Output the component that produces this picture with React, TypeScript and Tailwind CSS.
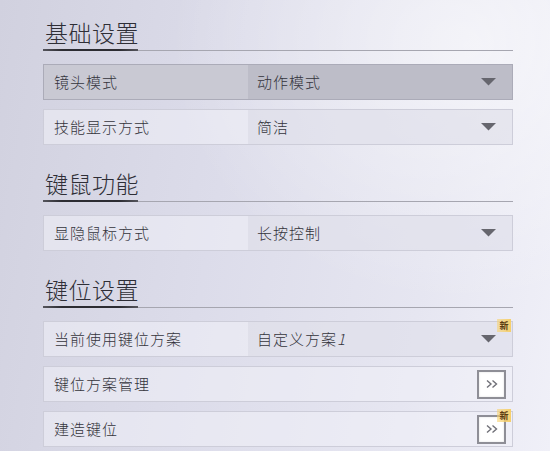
import React from "react";

const font = { fontFamily: '"Noto Sans CJK SC", "Noto Sans", sans-serif' };

function Arrow() {
  return (
    <svg width="15" height="8" viewBox="0 0 15 8" className="block">
      <path d="M0 0 H15 L7.5 7.5 Z" fill="#66666e" />
    </svg>
  );
}

function Chevrons() {
  return (
    <svg width="14" height="10" viewBox="0 0 14 10" className="block">
      <path d="M2 1.5 L6 5 L2 8.5 M7.5 1.5 L11.5 5 L7.5 8.5" fill="none" stroke="#707078" strokeWidth="1.4" strokeLinejoin="miter" />
    </svg>
  );
}

function Badge() {
  return (
    <div className="absolute right-[1px] top-[-3px] flex h-[13px] w-[14px] items-center justify-center bg-[linear-gradient(90deg,rgba(247,210,110,0.55),#f6cf6a)] text-[9px] font-bold leading-none text-[#5a3a10]">
      新
    </div>
  );
}

function SectionTitle({ title }: { title: string }) {
  return (
    <div className="flex flex-col">
      <div className="flex h-[28px] items-center pl-[2px] text-[23px] font-light leading-[28px] tracking-[0.5px] text-[#2e2e36]">{title}</div>
      <div className="mt-[3px] flex h-[2px] items-end">
        <div className="h-[2px] w-[95px] bg-[linear-gradient(90deg,#55555c,#2c2c32_20%,#2c2c32_80%,#55555c)]" />
        <div className="h-[1px] flex-1 bg-[#a6a6b0]" />
      </div>
    </div>
  );
}

function SelectRow({ label, value, active, badge }: { label: string; value: React.ReactNode; active?: boolean; badge?: boolean }) {
  return (
    <div
      className={
        "relative flex h-[36px] border " +
        (active ? "border-[#ababb8] bg-[#c9c9d3]" : "border-[#cdcdd9] bg-[rgba(240,240,248,0.55)]")
      }
    >
      <div className="flex w-[204px] items-center pl-[10px] text-[15px] font-light tracking-[1px] text-[#34343c]">{label}</div>
      <div
        className={
          "flex flex-1 items-center justify-between pl-[9px] pr-[16px] text-[15px] font-light tracking-[1px] text-[#34343c] " +
          (active ? "bg-[#bdbdc8]" : "bg-[rgba(200,200,215,0.28)]")
        }
      >
        <span>{value}</span>
        <Arrow />
      </div>
      {badge && <Badge />}
    </div>
  );
}

function ButtonRow({ label, badge }: { label: string; badge?: boolean }) {
  return (
    <div className="relative flex h-[36px] items-center justify-between border border-[#cdcdd9] bg-[rgba(240,240,248,0.55)] pl-[10px] pr-[6px]">
      <span className="text-[15px] font-light tracking-[1px] text-[#34343c]">{label}</span>
      <div className="flex h-[29px] w-[29px] items-center justify-center border-2 border-[#8e8e96] bg-white shadow-[inset_0_0_2px_rgba(0,0,0,0.15)]">
        <Chevrons />
      </div>
      {badge && <Badge />}
    </div>
  );
}

export default function App() {
  return (
    <div
      style={font}
      className="relative h-[451px] w-[550px] overflow-hidden bg-[linear-gradient(100deg,#d1d1df_0%,#dcdcea_40%,#e6e6f1_75%,#f0f0f8_100%)]"
    >
      <div className="pointer-events-none absolute inset-0 bg-[radial-gradient(ellipse_at_85%_10%,rgba(255,255,255,0.55),rgba(255,255,255,0)_45%)]" />
      <div className="relative ml-[43px] flex w-[470px] flex-col pt-[18px]">
        <SectionTitle title="基础设置" />
        <div className="mt-[13px] flex flex-col gap-[9px]">
          <SelectRow label="镜头模式" value="动作模式" active />
          <SelectRow label="技能显示方式" value="简洁" />
        </div>

        <div className="mt-[24px]">
          <SectionTitle title="键鼠功能" />
        </div>
        <div className="mt-[13px] flex flex-col gap-[9px]">
          <SelectRow label="显隐鼠标方式" value="长按控制" />
        </div>

        <div className="mt-[24px]">
          <SectionTitle title="键位设置" />
        </div>
        <div className="mt-[13px] flex flex-col gap-[9px]">
          <SelectRow
            label="当前使用键位方案"
            value={
              <>
                自定义方案<span className="italic">1</span>
              </>
            }
            badge
          />
          <ButtonRow label="键位方案管理" />
          <ButtonRow label="建造键位" badge />
        </div>
      </div>
    </div>
  );
}
